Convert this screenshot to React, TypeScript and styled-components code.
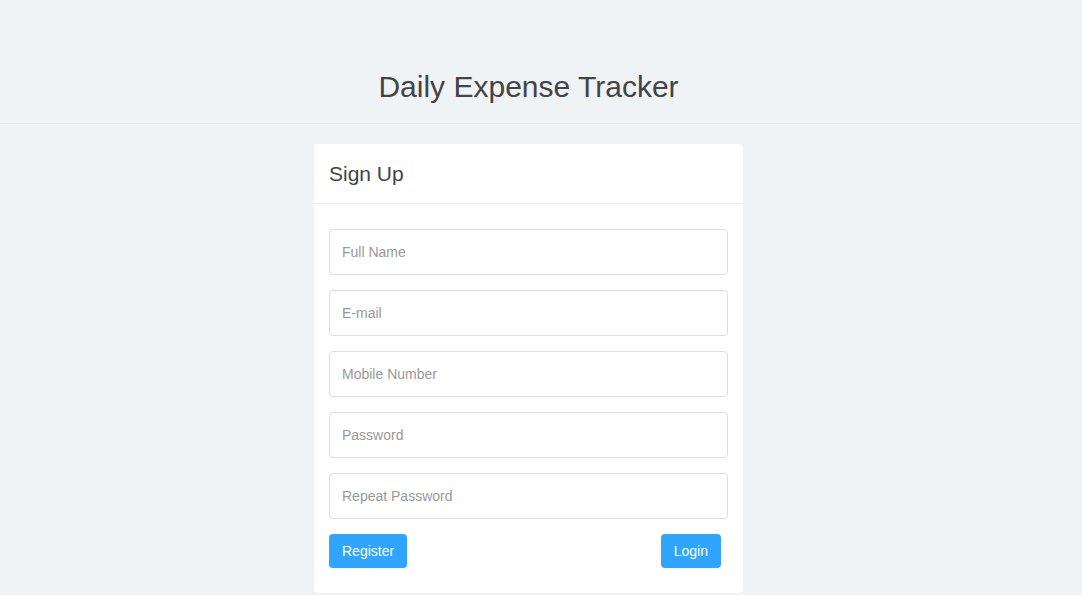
import React from "react";
import styled, { createGlobalStyle } from "styled-components";

const Global = createGlobalStyle`
  html, body {
    margin: 0;
    padding: 0;
    background: #f0f3f6;
    font-family: "Liberation Sans", Arial, sans-serif;
    color: #444444;
  }
  * { box-sizing: border-box; }
`;

const Header = styled.header`
  padding: 72px 0 21px;
  border-bottom: 1px solid #e6e9ed;
`;

const Column = styled.div`
  width: 429px;
  margin-left: 314px;
`;

const Title = styled.h1`
  margin: 0;
  font-size: 30px;
  line-height: 30px;
  font-weight: 400;
  text-align: center;
  white-space: nowrap;
  color: #444444;
`;

const Card = styled.section`
  margin-top: 20px;
  background: #ffffff;
  border-radius: 4px;
  box-shadow: 0 1px 1px rgba(0, 0, 0, 0.06);
`;

const CardHeader = styled.div`
  height: 60px;
  padding: 0 15px;
  display: flex;
  align-items: center;
  border-bottom: 1px solid #e9ecf2;
  font-size: 21px;
  line-height: 20px;
  color: #444444;
`;

const CardBody = styled.form`
  padding: 25px 15px 25px;
  display: flex;
  flex-direction: column;
  gap: 15px;
`;

const Field = styled.input`
  display: block;
  width: 100%;
  height: 46px;
  padding: 0 12px;
  border: 1px solid #dddddd;
  border-radius: 4px;
  font-family: "Liberation Sans", Arial, sans-serif;
  font-size: 14px;
  color: #444444;
  background: #ffffff;
  outline: none;
  &::placeholder {
    color: #999999;
  }
`;

const Actions = styled.div`
  display: flex;
  justify-content: space-between;
  padding-right: 7px;
`;

const Button = styled.button`
  height: 34px;
  padding: 0 13px;
  border: none;
  border-radius: 4px;
  background: #30a5ff;
  color: #ffffff;
  font-family: "Liberation Sans", Arial, sans-serif;
  font-size: 14px;
  cursor: pointer;
`;

export default function App() {
  return (
    <>
      <Global />
      <Header>
        <Column>
          <Title>Daily Expense Tracker</Title>
        </Column>
      </Header>
      <Column>
        <Card>
          <CardHeader>Sign Up</CardHeader>
          <CardBody onSubmit={(e) => e.preventDefault()}>
            <Field type="text" placeholder="Full Name" />
            <Field type="email" placeholder="E-mail" />
            <Field type="text" placeholder="Mobile Number" />
            <Field type="password" placeholder="Password" />
            <Field type="password" placeholder="Repeat Password" />
            <Actions>
              <Button type="submit">Register</Button>
              <Button type="button">Login</Button>
            </Actions>
          </CardBody>
        </Card>
      </Column>
    </>
  );
}
